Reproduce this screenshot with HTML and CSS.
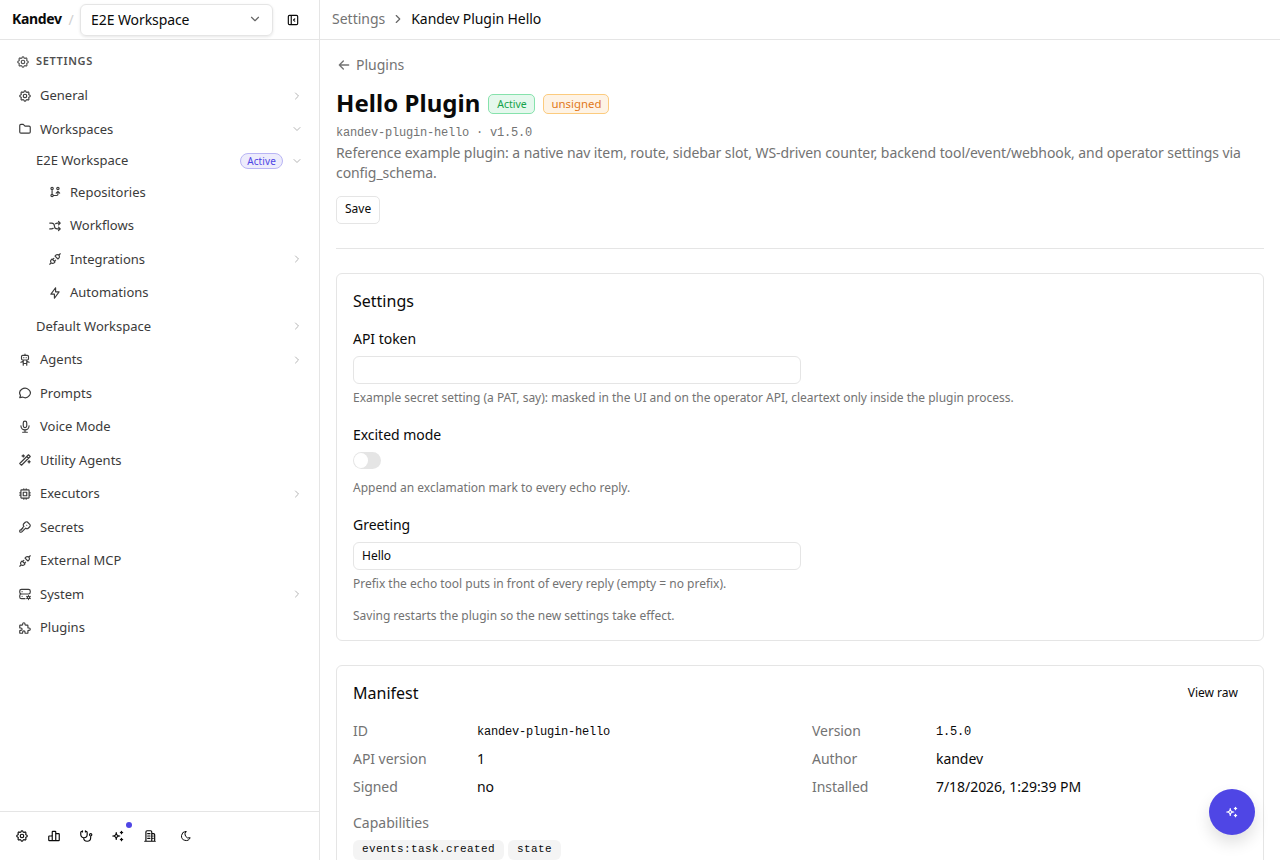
FILE: index.html
```html
<!DOCTYPE html>
<html lang="en">
<head>
    <meta charset="UTF-8">
    <meta name="viewport" content="width=device-width, initial-scale=1.0">
    <title>Kandev - Hello Plugin</title>
    <link rel="stylesheet" href="styles.css">
</head>
<body>
    <!-- Icon set -->
    <svg class="sprite" aria-hidden="true">
        <symbol id="settings" viewBox="0 0 24 24"><path d="M10.325 4.317c.426 -1.756 2.924 -1.756 3.35 0a1.724 1.724 0 0 0 2.573 1.066c1.543 -.94 3.31 .826 2.37 2.37a1.724 1.724 0 0 0 1.065 2.572c1.756 .426 1.756 2.924 0 3.35a1.724 1.724 0 0 0 -1.066 2.573c.94 1.543 -.826 3.31 -2.37 2.37a1.724 1.724 0 0 0 -2.572 1.065c-.426 1.756 -2.924 1.756 -3.35 0a1.724 1.724 0 0 0 -2.573 -1.066c-1.543 .94 -3.31 -.826 -2.37 -2.37a1.724 1.724 0 0 0 -1.065 -2.572c-1.756 -.426 -1.756 -2.924 0 -3.35a1.724 1.724 0 0 0 1.066 -2.573c-.94 -1.543 .826 -3.31 2.37 -2.37c1 .608 2.296 .07 2.572 -1.065"/><path d="M9 12a3 3 0 1 0 6 0a3 3 0 0 0 -6 0"/></symbol>
        <symbol id="folder" viewBox="0 0 24 24"><path d="M5 4h4l3 3h7a2 2 0 0 1 2 2v8a2 2 0 0 1 -2 2h-14a2 2 0 0 1 -2 -2v-11a2 2 0 0 1 2 -2"/></symbol>
        <symbol id="repo" viewBox="0 0 24 24"><path d="M5 18a2 2 0 1 0 4 0a2 2 0 1 0 -4 0M5 6a2 2 0 1 0 4 0a2 2 0 1 0 -4 0M15 6a2 2 0 1 0 4 0a2 2 0 1 0 -4 0M7 8v8M9 18h6a2 2 0 0 0 2 -2v-5M14 14l3 -3l3 3"/></symbol>
        <symbol id="shuffle" viewBox="0 0 24 24"><path d="M18 4l3 3l-3 3M18 20l3 -3l-3 -3M3 7h3a5 5 0 0 1 5 5a5 5 0 0 0 5 5h5M21 7h-5a4.978 4.978 0 0 0 -3 1m-4 8a4.984 4.984 0 0 1 -3 1h-3"/></symbol>
        <symbol id="plug" viewBox="0 0 24 24"><path d="M7 12l5 5l-1.5 1.5a3.536 3.536 0 1 1 -5 -5l1.5 -1.5M17 12l-5 -5l1.5 -1.5a3.536 3.536 0 1 1 5 5l-1.5 1.5M3 21l2.5 -2.5M18.5 5.5l2.5 -2.5M10 11l-2 2M13 14l-2 2"/></symbol>
        <symbol id="bolt" viewBox="0 0 24 24"><path d="M13 3v7h6l-8 11v-7h-6l8 -11"/></symbol>
        <symbol id="robot" viewBox="0 0 24 24"><path d="M6 6a2 2 0 0 1 2 -2h8a2 2 0 0 1 2 2v4a2 2 0 0 1 -2 2h-8a2 2 0 0 1 -2 -2l0 -4M12 2v2M9 12v9M15 12v9M5 16l4 -2M15 14l4 2M9 18h6M10 8v.01M14 8v.01"/></symbol>
        <symbol id="message" viewBox="0 0 24 24"><path d="M3 20l1.3 -3.9c-2.324 -3.437 -1.426 -7.872 2.1 -10.374c3.526 -2.501 8.59 -2.296 11.845 .48c3.255 2.777 3.695 7.266 1.029 10.501c-2.666 3.235 -7.615 4.215 -11.574 2.293l-4.7 1"/></symbol>
        <symbol id="mic" viewBox="0 0 24 24"><path d="M9 5a3 3 0 0 1 3 -3a3 3 0 0 1 3 3v5a3 3 0 0 1 -3 3a3 3 0 0 1 -3 -3l0 -5M5 10a7 7 0 0 0 14 0M8 21l8 0M12 17l0 4"/></symbol>
        <symbol id="wand" viewBox="0 0 24 24"><path d="M6 21l15 -15l-3 -3l-15 15l3 3M15 6l3 3M9 3a2 2 0 0 0 2 2a2 2 0 0 0 -2 2a2 2 0 0 0 -2 -2a2 2 0 0 0 2 -2M19 13a2 2 0 0 0 2 2a2 2 0 0 0 -2 2a2 2 0 0 0 -2 -2a2 2 0 0 0 2 -2"/></symbol>
        <symbol id="cpu" viewBox="0 0 24 24"><path d="M5 6a1 1 0 0 1 1 -1h12a1 1 0 0 1 1 1v12a1 1 0 0 1 -1 1h-12a1 1 0 0 1 -1 -1l0 -12M9 9h6v6h-6l0 -6M3 10h2M3 14h2M10 3v2M14 3v2M21 10h-2M21 14h-2M14 21v-2M10 21v-2"/></symbol>
        <symbol id="key" viewBox="0 0 24 24"><path d="M16.555 3.843l3.602 3.602a2.877 2.877 0 0 1 0 4.069l-2.643 2.643a2.877 2.877 0 0 1 -4.069 0l-.301 -.301l-6.558 6.558a2 2 0 0 1 -1.239 .578l-.175 .008h-1.172a1 1 0 0 1 -.993 -.883l-.007 -.117v-1.172a2 2 0 0 1 .467 -1.284l.119 -.13l.414 -.414h2v-2h2v-2l2.144 -2.144l-.301 -.301a2.877 2.877 0 0 1 0 -4.069l2.643 -2.643a2.877 2.877 0 0 1 4.069 0M15 9h.01"/></symbol>
        <symbol id="server" viewBox="0 0 24 24"><path d="M3 7a3 3 0 0 1 3 -3h12a3 3 0 0 1 3 3v2a3 3 0 0 1 -3 3h-12a3 3 0 0 1 -3 -3l0 -2M12 20h-6a3 3 0 0 1 -3 -3v-2a3 3 0 0 1 3 -3h10.5M16 18a2 2 0 1 0 4 0a2 2 0 1 0 -4 0M18 14.5v1.5M18 20v1.5M21.032 16.25l-1.299 .75M16.27 19l-1.3 .75M14.97 16.25l1.3 .75M19.733 19l1.3 .75M7 8v.01M7 16v.01"/></symbol>
        <symbol id="puzzle" viewBox="0 0 24 24"><path d="M4 7h3a1 1 0 0 0 1 -1v-1a2 2 0 0 1 4 0v1a1 1 0 0 0 1 1h3a1 1 0 0 1 1 1v3a1 1 0 0 0 1 1h1a2 2 0 0 1 0 4h-1a1 1 0 0 0 -1 1v3a1 1 0 0 1 -1 1h-3a1 1 0 0 1 -1 -1v-1a2 2 0 0 0 -4 0v1a1 1 0 0 1 -1 1h-3a1 1 0 0 1 -1 -1v-3a1 1 0 0 1 1 -1h1a2 2 0 0 0 0 -4h-1a1 1 0 0 1 -1 -1v-3a1 1 0 0 1 1 -1"/></symbol>
        <symbol id="chart" viewBox="0 0 24 24"><path d="M3 13a1 1 0 0 1 1 -1h4a1 1 0 0 1 1 1v6a1 1 0 0 1 -1 1h-4a1 1 0 0 1 -1 -1l0 -6M15 9a1 1 0 0 1 1 -1h4a1 1 0 0 1 1 1v10a1 1 0 0 1 -1 1h-4a1 1 0 0 1 -1 -1l0 -10M9 5a1 1 0 0 1 1 -1h4a1 1 0 0 1 1 1v14a1 1 0 0 1 -1 1h-4a1 1 0 0 1 -1 -1l0 -14M4 20h14"/></symbol>
        <symbol id="stethoscope" viewBox="0 0 24 24"><path d="M6 4h-1a2 2 0 0 0 -2 2v3.5a5.5 5.5 0 0 0 11 0v-3.5a2 2 0 0 0 -2 -2h-1M8 15a6 6 0 1 0 12 0v-3M11 3v2M6 3v2M18 10a2 2 0 1 0 4 0a2 2 0 1 0 -4 0"/></symbol>
        <symbol id="sparkles" viewBox="0 0 24 24"><path d="M16 18a2 2 0 0 1 2 2a2 2 0 0 1 2 -2a2 2 0 0 1 -2 -2a2 2 0 0 1 -2 2m0 -12a2 2 0 0 1 2 2a2 2 0 0 1 2 -2a2 2 0 0 1 -2 -2a2 2 0 0 1 -2 2m-7 12a6 6 0 0 1 6 -6a6 6 0 0 1 -6 -6a6 6 0 0 1 -6 6a6 6 0 0 1 6 6"/></symbol>
        <symbol id="building" viewBox="0 0 24 24"><path d="M3 21l18 0M5 21v-16a2 2 0 0 1 2 -2h6a2 2 0 0 1 2 2v16M15 8h3a2 2 0 0 1 2 2v11M8 8h4M8 12h4M8 16h4M17 12h.5M17 16h.5"/></symbol>
        <symbol id="moon" viewBox="0 0 24 24"><path d="M12 3c.132 0 .263 0 .393 0a7.5 7.5 0 0 0 7.92 12.446a9 9 0 1 1 -8.313 -12.454l0 .008"/></symbol>
        <symbol id="collapse" viewBox="0 0 24 24"><path d="M4 6a2 2 0 0 1 2 -2h12a2 2 0 0 1 2 2v12a2 2 0 0 1 -2 2h-12a2 2 0 0 1 -2 -2l0 -12M9 4v16M15 10l-2 2l2 2"/></symbol>
        <symbol id="right" viewBox="0 0 24 24"><path d="M9 6l6 6l-6 6"/></symbol>
        <symbol id="down" viewBox="0 0 24 24"><path d="M6 9l6 6l6 -6"/></symbol>
        <symbol id="back" viewBox="0 0 24 24"><path d="M5 12l14 0M5 12l6 6M5 12l6 -6"/></symbol>
    </svg>

    <aside class="sidebar">
        <div class="sidebar-top">
            <span class="brand">Kandev</span>
            <span class="slash">/</span>
            <button class="workspace-select">E2E Workspace <svg class="icon"><use href="#down"/></svg></button>
            <button class="icon-btn"><svg class="icon"><use href="#collapse"/></svg></button>
        </div>

        <nav class="nav">
            <div class="nav-title"><svg class="icon"><use href="#settings"/></svg><span>SETTINGS</span></div>
            <ul>
                <li><a class="item"><svg class="icon"><use href="#settings"/></svg>General<svg class="icon chevron"><use href="#right"/></svg></a></li>
                <li>
                    <a class="item"><svg class="icon"><use href="#folder"/></svg>Workspaces<svg class="icon chevron"><use href="#down"/></svg></a>
                    <ul>
                        <li>
                            <a class="item workspace">E2E Workspace<span class="pill">Active</span><svg class="icon chevron"><use href="#down"/></svg></a>
                            <ul>
                                <li><a class="item child"><svg class="icon"><use href="#repo"/></svg>Repositories</a></li>
                                <li><a class="item child"><svg class="icon"><use href="#shuffle"/></svg>Workflows</a></li>
                                <li><a class="item child"><svg class="icon"><use href="#plug"/></svg>Integrations<svg class="icon chevron"><use href="#right"/></svg></a></li>
                                <li><a class="item child"><svg class="icon"><use href="#bolt"/></svg>Automations</a></li>
                            </ul>
                        </li>
                        <li><a class="item workspace">Default Workspace<svg class="icon chevron"><use href="#right"/></svg></a></li>
                    </ul>
                </li>
                <li><a class="item"><svg class="icon"><use href="#robot"/></svg>Agents<svg class="icon chevron"><use href="#right"/></svg></a></li>
                <li><a class="item"><svg class="icon"><use href="#message"/></svg>Prompts</a></li>
                <li><a class="item"><svg class="icon"><use href="#mic"/></svg>Voice Mode</a></li>
                <li><a class="item"><svg class="icon"><use href="#wand"/></svg>Utility Agents</a></li>
                <li><a class="item"><svg class="icon"><use href="#cpu"/></svg>Executors<svg class="icon chevron"><use href="#right"/></svg></a></li>
                <li><a class="item"><svg class="icon"><use href="#key"/></svg>Secrets</a></li>
                <li><a class="item"><svg class="icon"><use href="#plug"/></svg>External MCP</a></li>
                <li><a class="item"><svg class="icon"><use href="#server"/></svg>System<svg class="icon chevron"><use href="#right"/></svg></a></li>
                <li><a class="item"><svg class="icon"><use href="#puzzle"/></svg>Plugins</a></li>
            </ul>
        </nav>

        <div class="sidebar-footer">
            <button class="icon-btn"><svg class="icon"><use href="#settings"/></svg></button>
            <button class="icon-btn"><svg class="icon"><use href="#chart"/></svg></button>
            <button class="icon-btn"><svg class="icon"><use href="#stethoscope"/></svg></button>
            <button class="icon-btn"><svg class="icon"><use href="#sparkles"/></svg><span class="dot"></span></button>
            <button class="icon-btn"><svg class="icon"><use href="#building"/></svg></button>
            <button class="icon-btn theme-btn"><svg class="icon"><use href="#moon"/></svg></button>
        </div>
    </aside>

    <main class="main">
        <header class="topbar">
            <span class="muted">Settings</span>
            <svg class="icon"><use href="#right"/></svg>
            <span class="current">Kandev Plugin Hello</span>
        </header>

        <div class="content">
            <a class="back-link"><svg class="icon"><use href="#back"/></svg>Plugins</a>
            <div class="title-row">
                <h1>Hello Plugin</h1>
                <span class="badge badge-active">Active</span>
                <span class="badge badge-unsigned">unsigned</span>
            </div>
            <p class="version">kandev-plugin-hello · v1.5.0</p>
            <p class="description">Reference example plugin: a native nav item, route, sidebar slot, WS-driven counter, backend tool/event/webhook, and operator settings via config_schema.</p>
            <button class="save-btn">Save</button>
            <hr>

            <section class="card">
                <h2>Settings</h2>
                <div class="field">
                    <label for="token">API token</label>
                    <input id="token" type="password">
                    <p class="help">Example secret setting (a PAT, say): masked in the UI and on the operator API, cleartext only inside the plugin process.</p>
                </div>
                <div class="field">
                    <label>Excited mode</label>
                    <div class="switch-row"><button class="switch" role="switch" aria-checked="false"></button></div>
                    <p class="help">Append an exclamation mark to every echo reply.</p>
                </div>
                <div class="field">
                    <label for="greeting">Greeting</label>
                    <input id="greeting" type="text" value="Hello">
                    <p class="help">Prefix the echo tool puts in front of every reply (empty = no prefix).</p>
                </div>
                <p class="help">Saving restarts the plugin so the new settings take effect.</p>
            </section>

            <section class="card">
                <div class="card-header">
                    <h2>Manifest</h2>
                    <button class="raw-btn">View raw</button>
                </div>
                <dl class="manifest">
                    <div><dt>ID</dt><dd class="mono">kandev-plugin-hello</dd></div>
                    <div><dt>Version</dt><dd class="mono">1.5.0</dd></div>
                    <div><dt>API version</dt><dd>1</dd></div>
                    <div><dt>Author</dt><dd>kandev</dd></div>
                    <div><dt>Signed</dt><dd>no</dd></div>
                    <div><dt>Installed</dt><dd>7/18/2026, 1:29:39 PM</dd></div>
                </dl>
                <p class="cap-title">Capabilities</p>
                <div class="chips">
                    <span class="chip">events:task.created</span>
                    <span class="chip">state</span>
                </div>
            </section>
        </div>
    </main>

    <button class="fab"><svg class="icon"><use href="#sparkles"/></svg></button>
</body>
</html>
```
FILE: styles.css
```css
* {
    box-sizing: border-box;
    margin: 0;
    padding: 0;
}

body {
    display: flex;
    height: 100vh;
    overflow: hidden;
    background: #fff;
    color: #0a0a0a;
    font-family: "Noto Sans", sans-serif;
    font-size: 14px;
    line-height: 20px;
}

button, input {
    font-family: inherit;
    color: inherit;
    background: none;
    border: none;
}

ul {
    list-style: none;
}

.sprite {
    display: none;
}

.icon {
    width: 14px;
    height: 14px;
    flex-shrink: 0;
    fill: none;
    stroke: currentColor;
    stroke-width: 2;
    stroke-linecap: round;
    stroke-linejoin: round;
}

.muted {
    color: #737373;
}

/* Sidebar */
.sidebar {
    display: flex;
    flex-direction: column;
    width: 320px;
    flex-shrink: 0;
    border-right: 1px solid #e5e5e5;
}

.sidebar-top {
    display: flex;
    align-items: center;
    height: 40px;
    padding: 0 12px;
    border-bottom: 1px solid #e5e5e5;
}

.brand {
    width: 50px;
    font-weight: 700;
    line-height: 18px;
    letter-spacing: -0.35px;
    padding-bottom: 2px;
}

.slash {
    width: 18px;
    text-align: center;
    color: #d0d0d0;
}

.workspace-select {
    display: flex;
    align-items: center;
    justify-content: space-between;
    width: 193px;
    height: 32px;
    margin-right: 6px;
    padding: 0 10px 1px;
    font-size: 14px;
    letter-spacing: -0.08px;
    border: 1px solid #e5e5e5;
    border-radius: 6px;
    box-shadow: 0 1px 3px rgba(0, 0, 0, 0.1);
}

.workspace-select .icon {
    color: #666;
}

.icon-btn {
    position: relative;
    display: flex;
    align-items: center;
    justify-content: center;
    width: 28px;
    height: 28px;
}

.nav {
    flex: 1;
    padding: 12px 8px 0;
}

.nav-title {
    display: flex;
    align-items: center;
    gap: 6px;
    height: 20px;
    margin-bottom: 8px;
    padding: 0 8px;
    font-size: 11px;
    font-weight: 600;
    letter-spacing: 0.65px;
    color: #505050;
}

.nav-title span {
    padding-bottom: 2px;
}

.nav li + li {
    margin-top: 2px;
}

.item {
    display: flex;
    align-items: center;
    gap: 8px;
    padding: 6px 8px 6px 10px;
    font-size: 13px;
    line-height: 19.5px;
    color: #3b3b3b;
}

.item.workspace {
    padding-left: 28px;
}

.item.child {
    padding-left: 40px;
}

.chevron {
    width: 12px;
    height: 12px;
    margin-left: auto;
    color: #b5b5b5;
}

.pill {
    height: 16px;
    margin-left: auto;
    padding: 0 6px;
    font-size: 10px;
    line-height: 14px;
    letter-spacing: 0.12px;
    color: #4f46e5;
    background: #edecfc;
    border: 1px solid #b9b5f5;
    border-radius: 8px;
}

.pill + .chevron {
    margin-left: 0;
}

.sidebar-footer {
    display: flex;
    align-items: center;
    gap: 4px;
    height: 49px;
    padding: 0 8px;
    border-top: 1px solid #e5e5e5;
}

.theme-btn {
    margin-left: 4px;
}

.theme-btn .icon {
    width: 12px;
    height: 12px;
}

.dot {
    position: absolute;
    top: 0;
    right: 0;
    width: 6px;
    height: 6px;
    background: #4f46e5;
    border-radius: 50%;
}

/* Main */
.main {
    flex: 1;
    min-width: 0;
}

.topbar {
    display: flex;
    align-items: center;
    gap: 6px;
    height: 40px;
    padding: 0 12px 1px;
    border-bottom: 1px solid #e5e5e5;
}

.topbar .icon {
    color: #666;
}

.current {
    letter-spacing: -0.08px;
}

.content {
    padding: 15px 16px 0;
}

.back-link {
    display: flex;
    align-items: center;
    gap: 4px;
    color: #737373;
}

.back-link .icon {
    width: 16px;
    height: 16px;
}

.title-row {
    display: flex;
    align-items: center;
    gap: 8px;
    height: 32px;
    margin-top: 13px;
}

h1 {
    font-size: 24px;
    font-weight: 700;
    line-height: 32px;
    letter-spacing: 0.05px;
    padding-bottom: 2px;
}

.badge {
    height: 20px;
    border: 1px solid;
    border-radius: 5px;
    text-align: center;
}

.badge-active {
    width: 47px;
    font-size: 10.5px;
    line-height: 18px;
    letter-spacing: -0.05px;
    color: #16a34a;
    background: #e5f8ed;
    border-color: #86e2ac;
}

.badge-unsigned {
    width: 66px;
    font-size: 11.4px;
    line-height: 17px;
    color: #e17820;
    background: #fef3e5;
    border-color: #fccb7e;
}

.version {
    font-family: "Liberation Mono", monospace;
    font-size: 12px;
    line-height: 16px;
    letter-spacing: -0.2px;
    margin-top: 5px;
    color: #737373;
}

.description {
    margin-top: 2px;
    letter-spacing: -0.083px;
    color: #737373;
}

.save-btn {
    display: block;
    height: 28px;
    margin-top: 13px;
    padding: 0 8px 3px;
    font-size: 12px;
    border: 1px solid #e5e5e5;
    border-radius: 5px;
}

hr {
    margin: 24px 0;
    border: none;
    border-top: 1px solid #e5e5e5;
}

.card {
    margin-bottom: 24px;
    padding: 16px;
    border: 1px solid #e5e5e5;
    border-radius: 6px;
}

h2 {
    font-size: 16px;
    font-weight: 400;
    line-height: 22px;
}

.card > h2 {
    margin-bottom: 14px;
}

.field {
    display: flex;
    flex-direction: column;
    gap: 6px;
    margin-bottom: 16px;
}

.field label {
    height: 24px;
    line-height: 26px;
    letter-spacing: -0.03px;
}

.field input {
    width: 448px;
    height: 28px;
    padding: 0 8px 2px;
    font-size: 12px;
    border: 1px solid #e5e5e5;
    border-radius: 6px;
}

.switch-row {
    height: 22px;
}

.switch {
    display: block;
    width: 28px;
    height: 17px;
    padding: 1px;
    background: #e5e5e5;
    border-radius: 9px;
}

.switch::before {
    content: "";
    display: block;
    width: 14px;
    height: 15px;
    background: #fff;
    border-radius: 50%;
}

.help {
    font-size: 12px;
    line-height: 16px;
    letter-spacing: -0.01px;
    color: #737373;
}

.card-header {
    display: flex;
    align-items: center;
    justify-content: space-between;
    height: 22px;
    margin-bottom: 17px;
}

.raw-btn {
    padding: 0 9px 2px;
    font-size: 12px;
}

.manifest {
    display: grid;
    grid-template-columns: 1fr 1fr;
    gap: 8px 24px;
}

.manifest div {
    display: grid;
    grid-template-columns: 112px 1fr;
    gap: 12px;
    height: 20px;
    letter-spacing: -0.05px;
}

.manifest dt, .cap-title {
    color: #737373;
}

.manifest .mono {
    padding-top: 1px;
    font-family: "Liberation Mono", monospace;
    font-size: 12px;
    letter-spacing: -0.2px;
}

.cap-title {
    margin: 16px 0 7px;
}

.chips {
    display: flex;
    gap: 4px;
}

.chip {
    height: 20px;
    padding: 0 9px;
    font-family: "Liberation Mono", monospace;
    font-size: 11px;
    line-height: 19px;
    letter-spacing: 0.4px;
    background: #f4f4f4;
    border-radius: 6px;
}

.fab {
    position: fixed;
    right: 25px;
    bottom: 25px;
    display: flex;
    align-items: center;
    justify-content: center;
    width: 46px;
    height: 46px;
    color: #fff;
    background: #4f46e5;
    border-radius: 50%;
    box-shadow: 0 8px 16px rgba(0, 0, 0, 0.12);
}
```
